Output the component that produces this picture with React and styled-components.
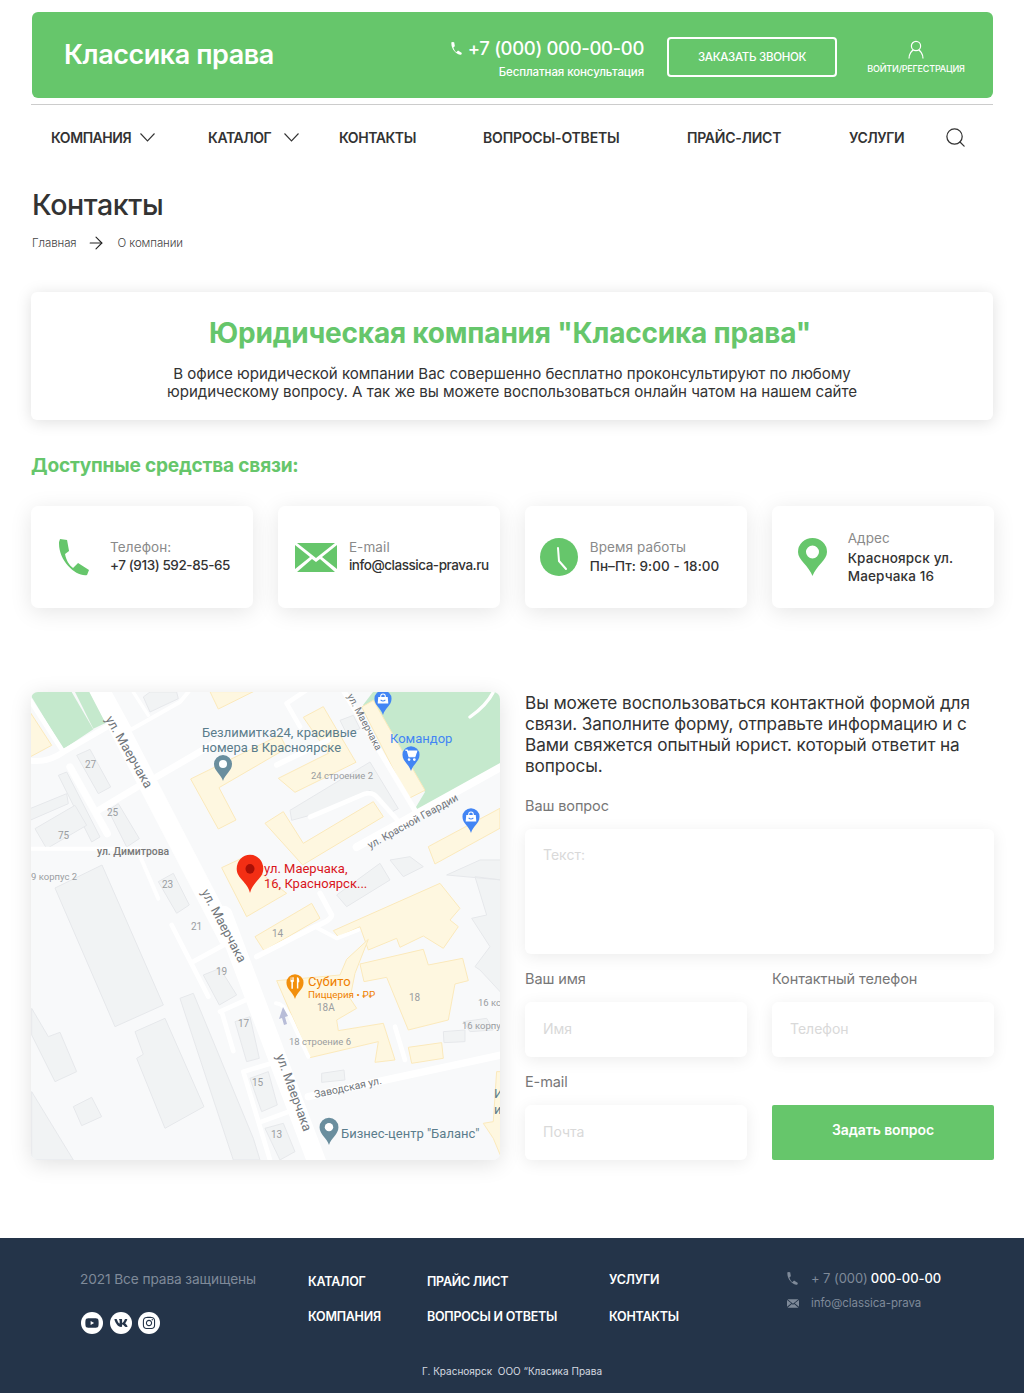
import React from "react";
import styled, { createGlobalStyle } from "styled-components";
import { Search, ArrowRight } from "lucide-react";
import { FaVk, FaYoutube, FaInstagram } from "react-icons/fa";

const GREEN = "#66c66b";
const FONT = `Inter, "Noto Sans", sans-serif`;

const Global = createGlobalStyle`
  * { box-sizing: border-box; }
  html, body { margin: 0; padding: 0; background: #fff; }
  body { font-family: ${FONT}; color: #333; }
`;

const Page = styled.div`width: 1024px; height: 1393px; display: flex; flex-direction: column;`;
const Main = styled.div`padding: 12px 31px 0 31px; flex: 1;`;

const TopBar = styled.header`
  height: 86px; margin-left: 1px; background: ${GREEN}; border-radius: 6px; color: #fff;
  display: flex; align-items: center; padding: 0 27px 0 32px;
`;
const Logo = styled.div`font-size: 27px; font-weight: 600; letter-spacing: -0.45px; flex: 1; padding-bottom: 2px;`;
const PhoneBlock = styled.div`display: flex; flex-direction: column; align-items: flex-end; gap: 6px; padding-top: 6px;`;
const PhoneLine = styled.div`display: flex; align-items: center; gap: 6px; font-size: 18.5px; line-height: 22px; font-weight: 500; letter-spacing: -0.35px;`;
const PhoneHint = styled.div`font-size: 11.5px; line-height: 14px; font-weight: 500; letter-spacing: -0.1px;`;
const CallButton = styled.button`
  width: 170px; height: 40px; margin: 4px 0 0 23px; border: 2px solid #fff; border-radius: 4px; background: transparent;
  color: #fff; font: 500 11.5px ${FONT}; letter-spacing: -0.3px;
`;
const LoginBlock = styled.div`width: 100px; margin-left: 29px; display: flex; flex-direction: column; align-items: center; gap: 4px; font-size: 9px; font-weight: 500; letter-spacing: -0.2px; white-space: nowrap; padding-top: 4px;`;

const Rule = styled.div`height: 1px; background: #ccc; margin-top: 6px;`;

const Nav = styled.nav`display: flex; align-items: center; height: 65px; padding-left: 20px;`;
const NavItem = styled.div`
  width: ${(p) => p.$w}px; display: flex; align-items: center; gap: ${(p) => p.$gap || 0}px;
  font-size: 14px; font-weight: 600; color: #333; letter-spacing: ${(p) => p.$ls ?? -0.45}px; white-space: nowrap;
`;

const Title = styled.h1`margin: 17px 0 0 1px; font-size: 28.6px; line-height: 36px; font-weight: 500; color: #333; letter-spacing: -0.4px;`;
const Crumbs = styled.div`display: flex; align-items: center; height: 20px; margin: 10px 0 0 1px; font-size: 11.5px; font-weight: 300; color: #444; letter-spacing: -0.1px;`;
const CrumbArrow = styled.span`display: flex; margin: 0 12px 0 9px; color: #222;`;

const Intro = styled.section`
  margin-top: 39px; height: 128px; background: #fff; border-radius: 6px; box-shadow: 0 2px 16px rgba(0,0,0,.13);
  text-align: center; padding-top: 23px;
`;
const IntroTitle = styled.h2`margin: 0; padding-right: 4px; font-size: 28px; line-height: 36px; font-weight: 700; color: ${GREEN}; letter-spacing: -0.2px;`;
const IntroText = styled.p`margin: 14px 0 0; font-size: 15.1px; line-height: 18px; color: #333; letter-spacing: -0.05px;`;

const SectionTitle = styled.h3`margin: 32px 0 0; font-size: 19.1px; line-height: 26px; font-weight: 700; color: ${GREEN}; letter-spacing: -0.2px;`;

const Cards = styled.div`display: grid; grid-template-columns: repeat(4, 222px); column-gap: 24.9px; margin-top: 28px;`;
const Card = styled.div`
  height: 102px; background: #fff; border-radius: 7px; box-shadow: 0 4px 22px rgba(0,0,0,.1);
  display: flex; align-items: center; gap: ${(p) => p.$gap}px; padding-left: ${(p) => p.$pad}px;
`;
const CardText = styled.div`margin-top: ${(p) => p.$top || 0}px;`;
const CardLabel = styled.div`font-size: 13.5px; line-height: 18px; color: #8a8a8a; letter-spacing: 0.1px;`;
const CardValue = styled.div`font-size: 13.5px; line-height: 18px; font-weight: 500; color: #333; letter-spacing: ${(p) => p.$ls}px; margin-top: ${(p) => p.$top || 0}px; white-space: nowrap;`;

const Columns = styled.div`display: grid; grid-template-columns: 469px 469px; column-gap: 25px; margin-top: 84px;`;
const MapBox = styled.div`height: 468px; border-radius: 7px; overflow: hidden; box-shadow: 0 4px 22px rgba(0,0,0,.12); background: #f8f9fa;`;
const MapSvg = styled.svg`display: block; width: 469px; height: 468px;`;

const FormCol = styled.div`display: flex; flex-direction: column;`;
const Lead = styled.p`margin: 0; font-size: 17.2px; line-height: 21px; color: #333; letter-spacing: -0.1px;`;
const FieldLabel = styled.label`display: block; font-size: 14.5px; line-height: 18px; color: #777; letter-spacing: -0.1px; margin-top: ${(p) => p.$top || 0}px;`;
const baseField = `
  width: 100%; display: block; border: 0; outline: 0; border-radius: 6px; background: #fff;
  box-shadow: 0 3px 16px rgba(0,0,0,.08); padding: 0 18px; font: 14px ${FONT}; color: #333;
  &::placeholder { color: #d9d9d9; opacity: 1; }
`;
const TextBox = styled.textarea`${baseField} height: 125px; margin-top: 14px; padding-top: 17px; resize: none;`;
const TextInput = styled.input`${baseField} height: 55px; margin-top: 14px; padding-bottom: 2px;`;
const FormRow = styled.div`display: grid; grid-template-columns: 222px 222px; column-gap: 25px; margin-top: ${(p) => p.$top}px; align-items: end;`;
const Submit = styled.button`height: 55px; padding: 0 0 6px; border: 0; border-radius: 2px; background: ${GREEN}; color: #fff; font: 600 14px ${FONT}; letter-spacing: -0.1px;`;

const Footer = styled.footer`height: 155px; background: #243449; color: #fff; padding: 33px 0 0 80px;`;
const FooterGrid = styled.div`display: grid; grid-template-columns: 228px 119px 182px 178px 1fr; height: 93px;`;
const Copy = styled.div`margin-top: -1px; font-size: 13.7px; line-height: 18px; color: #7f8a99; letter-spacing: -0.1px;`;
const Socials = styled.div`display: flex; gap: 6.5px; margin-top: 24px; padding-left: 1px;`;
const Social = styled.span`width: 22px; height: 22px; border-radius: 50%; background: #fff; color: #243449; display: flex; align-items: center; justify-content: center; font-size: 14px;`;
const FootCol = styled.div`display: flex; flex-direction: column; gap: ${(p) => p.$gap}px; padding-top: ${(p) => p.$top}px;`;
const FootLink = styled.div`font-size: 12.5px; line-height: 18px; font-weight: 600; letter-spacing: -0.25px; white-space: nowrap;`;
const FootContacts = styled.div`margin-top: -2px;`;
const ContactLine = styled.div`display: flex; align-items: center; gap: ${(p) => p.$gap}px; height: 18px; margin-bottom: 7px; font-size: 13px; color: #7f8a99; letter-spacing: -0.05px;`;
const Strong = styled.span`color: #fff; font-weight: 500; margin-left: 3px;`;
const Small = styled.span`font-size: 11.5px;`;
const Legal = styled.div`font-size: 10px; line-height: 14px; text-align: center; margin-left: -80px; color: #d5dae0; white-space: pre;`;

const Bld = styled.polygon`fill: ${(p) => (p.$y ? "#fef7e0" : "#f1f3f4")}; stroke: ${(p) => (p.$y ? "#fbe9bb" : "#e6e8eb")}; stroke-width: 3;`;
const Road = styled.path`fill: none; stroke: #fff; stroke-width: ${(p) => p.$w || 20}; stroke-linecap: round; stroke-linejoin: round;`;
const MapText = styled.text`font-family: Roboto, sans-serif; font-size: ${(p) => p.$s || 12}px; fill: ${(p) => p.$c || "#7d8084"}; font-weight: ${(p) => p.$b || 400};`;

const Phone = ({ s = 12, c = "#fff" }) => (
  <svg width={s * 0.84} height={s} viewBox="0 0 31 37"><path fill={c} d="M2 0L9 1l2 11-4 3c1 6 4 11 8 14l5-5 11 7-2 5C18 38 0 22 1 3z" /></svg>
);
const Chevron = () => (
  <svg width="15" height="9" viewBox="0 0 15 9" fill="none" stroke="#333" strokeWidth="1.1"><path d="M.5.5l7 7.500 7-7.500" /></svg>
);
const Mail = ({ w, h, c }) => (
  <svg width={w} height={h} viewBox="0 0 42 29"><path fill={c} d="M2 0h38L21 15zM0 2l15 12L0 26zM42 2v24L27 14zM2 29l15-13 4 3 4-3 15 13z" /></svg>
);
const Pin = ({ x, y, c, s = 1, children }) => (
  <g transform={`translate(${x} ${y}) scale(${s})`}>
    <path fill={c} d="M0 0C-2-7-9-10-9-17a9 9 0 1 1 18 0C9-10 2-7 0 0z" />
    {children}
  </g>
);
const Dot = () => <circle cx="0" cy="-17" r="4" fill="#fff" />;
const Bag = () => (
  <g fill="#fff">
    <path d="M-5-19h10l.6 7h-11.200z" />
    <path d="M-2.500-19c0-4 5-4 5 0" fill="none" stroke="#fff" strokeWidth="1.100" />
    <path d="M-2.500-16q2.500 2.500 5 0" fill="none" stroke="#4285f4" strokeWidth="1.100" />
  </g>
);
const Cart = () => (
  <g fill="none" stroke="#fff" strokeWidth="1.300">
    <path d="M-6-22h2l2 7h6l2-6h-9" fill="#fff" />
    <circle cx="-2" cy="-12" r=".8" /><circle cx="3.500" cy="-12" r=".8" />
  </g>
);
const Fork = () => (
  <g fill="#fff">
    <path d="M-4.500-23h.7v3h.6v-3h.7v3h.6v-3h.7v4.500l-1 .8v7h-1.600v-7l-1-.8z" />
    <path d="M2-23c2 0 2.500 2 2.500 5l-1 .5v6.500H2z" />
  </g>
);

const FrameA = ({ children }) => <g transform="translate(240 860) scale(.3333)">{children}</g>;
const FrameB = ({ children }) => <g transform="translate(290 692) scale(.3333)">{children}</g>;
const FrameC = ({ children }) => <g transform="translate(30 692) scale(.3333)">{children}</g>;
const Frame3 = ({ children }) => <g transform="translate(20 685) scale(.3333)">{children}</g>;
const Frame4 = ({ children }) => <g transform="translate(20 925) scale(.3333)">{children}</g>;

const MapArt = () => (
  <MapSvg viewBox="31 692 469 468">
    <rect x="31" y="692" width="469" height="468" fill="#f8f9fa" />
    <FrameC>
      <polygon fill="#c5e9cd" points="5,0 125,0 190,112 100,172 5,15" />
      <polygon fill="#c5e9cd" points="135,0 180,0 228,92 190,110" />
      <Bld $y points="0,60 65,160 0,195" />
      <Bld points="140,190 180,172 242,285 205,305" />
      <Bld points="85,250 110,240 210,435 185,450" />
      <Bld points="0,350 110,305 115,335 0,385" />
      <Bld points="15,410 135,340 170,400 50,470" />
      <Bld points="235,355 265,335 328,440 290,465" />
      <Bld points="340,15 360,0 440,0 445,20 360,60" />
      <Road $w={18} d="M-5 205Q50 215 100 180L230 105" />
      <Road $w={14} d="M0 25L100 180" />
      <Road $w={12} d="M300 115L450 30L475 0" />
      <Road $w={10} d="M240 0L300 110M310 0L355 70" />
      <Road $w={20} d="M205 355L330 280" />
      <Road $w={20} d="M380 255L560 150" />
      <Road $w={22} d="M120 225L232 425" />
      <Road $w={12} d="M-5 470H330" />
      <Road $w={12} d="M325 480L385 620" />
    </FrameC>
    <polygon fill="#c5e9cd" points="363,705 373,692 500,692 500,768 413,812 425,792" />
    <Frame3>
      <Bld $y points="570,20 700,20 595,72" />
      <Bld $y points="512,282 780,150 800,190 597,308 648,405 595,432" />
      <Bld $y points="775,280 925,205 850,97 910,65 1008,232 825,322" />
      <Bld $y points="735,415 790,380 850,475 1060,350 1090,395 848,540" />
      <Bld $y points="605,548 665,520 800,625 680,695" />
      <Bld $y points="1225,485 1440,370 1440,430 1245,537" />
      <Bld points="415,590 460,565 508,660 470,685" />
      <Road $w={16} d="M770 240L925 165" />
      <Road $w={14} d="M800 55L860 15M800 55L840 125" />
    </Frame3>
    <FrameB>
      <Bld $y points="215,45 250,25 405,295 355,320" />
      <Bld points="150,85 190,70 210,110 170,125" />
      <Bld points="0,355 240,210 325,350 305,360 240,295 60,370 5,385" />
      <Road $w={14} d="M60 375L225 305Q250 298 265 320L345 410" />
      <Road $w={16} d="M160 -5L375 355" />
      <Road $w={10} d="M540 75Q590 40 610 0" />
      <Road $w={24} d="M660 210L200 465" />
    </FrameB>
    <FrameA>
      <Bld points="290,105 420,10 450,60 320,140" />
      <Bld points="450,0 510,-10 550,20 490,50" />
      <Bld points="620,45 720,0 785,0 785,60 705,50 740,165 695,175 750,260 705,320 720,330 785,400 785,60" />
      <Bld points="670,485 740,475 760,510 690,515" />
      <Bld points="610,515 675,510 675,545 612,548" />
      <Bld $y points="45,230 215,130 240,175 72,272" />
      <Bld $y points="280,212 600,70 660,145 630,180 655,200 610,265 550,228 480,262 470,235 385,270 360,200 295,230" />
      <Bld $y points="385,238 320,298 300,345 110,362 210,593 415,545 405,607 465,600 430,490 295,512 290,480 350,445 330,415 345,340" />
      <Bld $y points="360,312 550,268 565,315 668,295 685,362 645,372 625,480 505,510 440,352 372,365" />
      <Bld $y points="505,562 605,548 610,595 515,610" />
      <Road $w={16} d="M240 100L275 165Q275 180 225 200L50 290" />
      <Road $w={12} d="M225 200L290 235L355 210" />
      <Road $w={14} d="M465 500L495 600" />
      <Road $w={12} d="M108 430Q130 430 150 470L205 590" />
    </FrameA>
    <Frame4>
      <Bld points="105,-111 246,-180 430,240 285,305" />
      <Bld points="345,320 435,280 552,545 435,610 350,400 370,388" />
      <Bld points="480,220 520,205 700,640 720,705 640,705" />
      <Bld points="160,545 215,517 245,575 185,602" />
      <Bld points="35,250 85,335 120,322 170,440 105,470 35,330" />
      <Bld points="35,500 160,705 35,705" />
      <Bld points="550,150 600,130 650,210 598,240" />
      <Bld points="645,290 690,275 718,400 680,410" />
      <Bld points="690,460 745,440 772,540 725,560" />
      <Bld points="735,610 790,595 825,680 780,705" />
      <Bld points="905,445 972,435 975,465 905,472" />
      <Bld $y points="1430,440 1445,440 1445,700 1420,640 1390,595 1420,590" />
      <Road $w={14} d="M455 0L565 215M520 110L620 55M600 260L700 215M605 260L640 378" />
      <Road $w={14} d="M670 440L770 410M670 440L750 705M725 590L820 555" />
      <Road $w={22} d="M865 515L1445 390" />
    </Frame4>
    <Frame3><Road $w={58} d="M235 10L625 760" /></Frame3>
    <Frame4><Road $w={56} d="M610 -30L890 710" /></Frame4>
    <polygon fill="#b8bdd8" points="283,1007 288,1016 285,1017 287,1024 284,1025 282,1018 279,1019" />

    <MapText transform="rotate(60 105 719)" x="105" y="719" $s={13} $c="#70757a">ул. Маерчака</MapText>
    <MapText transform="rotate(62 201 892)" x="201" y="892" $s={13} $c="#70757a">ул. Маерчака</MapText>
    <MapText transform="rotate(70 276 1056)" x="276" y="1056" $s={13} $c="#70757a">ул. Маерчака</MapText>
    <MapText transform="rotate(62 347 696)" x="347" y="696" $s={10} $c="#70757a">ул. Маерчака</MapText>
    <MapText transform="rotate(-29 370 849)" x="370" y="849" $s={10.5} $c="#70757a">ул. Красной Гвардии</MapText>
    <MapText transform="rotate(-12 315 1098)" x="315" y="1098" $s={10.5} $c="#70757a">Заводская ул.</MapText>
    <MapText x="97" y="855" $s={10.4} $c="#777" $b={500}>ул. Димитрова</MapText>

    <MapText x="202" y="737" $s={13} $c="#5b7d8c">Безлимитка24, красивые</MapText>
    <MapText x="202" y="752" $s={13} $c="#5b7d8c">номера в Красноярске</MapText>
    <MapText x="390" y="743" $s={13} $c="#4285f4">Командор</MapText>
    <MapText x="264" y="873" $s={13} $c="#d9161c">ул. Маерчака,</MapText>
    <MapText x="264" y="888" $s={13} $c="#d9161c">16, Красноярск...</MapText>
    <MapText x="308" y="986" $s={13} $c="#ef7f00">Субито</MapText>
    <MapText x="308" y="998" $s={9.8} $c="#ef7f00">Пиццерия • ₽₽</MapText>
    <MapText x="341" y="1138" $s={13} $c="#5b7d8c">Бизнес-центр "Баланс"</MapText>
    <MapText x="494" y="1098" $s={13} $c="#5b7d8c">И</MapText>
    <MapText x="494" y="1114" $s={13} $c="#5b7d8c">и</MapText>

    {[["85", "768", "27"], ["107", "816", "25"], ["58", "839", "75"], ["162", "888", "23"], ["191", "930", "21"], ["272", "937", "14"], ["216", "975", "19"], ["238", "1027", "17"], ["317", "1011", "18А"], ["409", "1001", "18"], ["252", "1086", "15"], ["271", "1138", "13"]].map(([x, y, t]) => (
      <MapText key={t} x={x} y={y} $s={10} $c="#9a9da1">{t}</MapText>
    ))}
    <MapText x="311" y="779" $s={9.5} $c="#9a9da1">24 строение 2</MapText>
    <MapText x="289" y="1045" $s={9.5} $c="#9a9da1">18 строение 6</MapText>
    <MapText x="31" y="880" $s={9.5} $c="#9a9da1">9 корпус 2</MapText>
    <MapText x="478" y="1006" $s={9.5} $c="#9a9da1">16 кс</MapText>
    <MapText x="462" y="1029" $s={9.5} $c="#9a9da1">16 корпу</MapText>

    <Pin x={223} y={781} c="#6a8e9e"><Dot /></Pin>
    <Pin x={383} y={715} c="#4285f4" s={.95}><Bag /></Pin>
    <Pin x={411} y={771} c="#4285f4" s={.95}><Cart /></Pin>
    <Pin x={471} y={833} c="#4285f4" s={.95}><Bag /></Pin>
    <Pin x={295} y={999} c="#f28f0c" s={.95}><Fork /></Pin>
    <Pin x={329} y={1145} c="#6a8e9e" s={1.05}><Dot /></Pin>
    <g transform="translate(250 893) scale(1.33 1.42)">
      <path fill="#f32e14" d="M0 0C-2-8-10-10-10-17a10 10 0 1 1 20 0C10-10 2-8 0 0z" />
      <circle cx="0" cy="-17" r="3.4" fill="#a80f06" />
    </g>
  </MapSvg>
);

export default function App() {
  return (
    <Page>
      <Global />
      <Main>
        <TopBar>
          <Logo>Классика права</Logo>
          <PhoneBlock>
            <PhoneLine><Phone s={13} />+7 (000) 000-00-00</PhoneLine>
            <PhoneHint>Бесплатная консультация</PhoneHint>
          </PhoneBlock>
          <CallButton>ЗАКАЗАТЬ ЗВОНОК</CallButton>
          <LoginBlock>
            <svg width="18" height="19" viewBox="0 0 18 19" fill="none" stroke="#fff" strokeWidth="1.2">
              <circle cx="9" cy="6" r="4.6" /><path d="M2 18.500c0-5 3-8 4.500-8.300M16 18.500c0-5-3-8-4.500-8.300" />
            </svg>
            ВОЙТИ/РЕГЕСТРАЦИЯ
          </LoginBlock>
        </TopBar>
        <Rule />
        <Nav>
          <NavItem $w={157} $gap={9}>КОМПАНИЯ <Chevron /></NavItem>
          <NavItem $w={131} $gap={13}>КАТАЛОГ <Chevron /></NavItem>
          <NavItem $w={144}>КОНТАКТЫ</NavItem>
          <NavItem $w={204} $ls={-0.17}>ВОПРОСЫ-ОТВЕТЫ</NavItem>
          <NavItem $w={162} $ls={-0.25}>ПРАЙС-ЛИСТ</NavItem>
          <NavItem $w={95}>УСЛУГИ</NavItem>
          <Search size={23} strokeWidth={1.3} color="#333" />
        </Nav>
        <Title>Контакты</Title>
        <Crumbs>Главная<CrumbArrow><ArrowRight size={20} strokeWidth={1.3} /></CrumbArrow>О компании</Crumbs>
        <Intro>
          <IntroTitle>Юридическая компания "Классика права"</IntroTitle>
          <IntroText>В офисе юридической компании Вас совершенно бесплатно проконсультируют по любому<br />юридическому вопросу. А так же вы можете воспользоваться онлайн чатом на нашем сайте</IntroText>
        </Intro>
        <SectionTitle>Доступные средства связи:</SectionTitle>
        <Cards>
          <Card $pad={27} $gap={21}>
            <Phone s={37} c={GREEN} />
            <CardText $top={-2}><CardLabel>Телефон:</CardLabel><CardValue $ls={-0.42}>+7 (913) 592-85-65</CardValue></CardText>
          </Card>
          <Card $pad={17} $gap={12}>
            <Mail w={42} h={29} c={GREEN} />
            <CardText $top={-2}><CardLabel>E-mail</CardLabel><CardValue $ls={-0.47}>info@classica-prava.ru</CardValue></CardText>
          </Card>
          <Card $pad={15} $gap={12}>
            <svg width="38" height="38" viewBox="0 0 38 38">
              <circle cx="19" cy="19" r="19" fill={GREEN} />
              <path d="M18 10l1 13 7 8" fill="none" stroke="#fff" strokeWidth="2" strokeLinecap="round" />
            </svg>
            <CardText $top={-2}><CardLabel>Время работы</CardLabel><CardValue $ls={0.06} $top={1}>Пн–Пт: 9:00 - 18:00</CardValue></CardText>
          </Card>
          <Card $pad={26} $gap={21}>
            <svg width="29" height="38" viewBox="0 0 29 38">
              <path fill={GREEN} fillRule="evenodd" d="M14.500 38C11 28 0 22 0 14a14.500 14 0 0 1 29 0c0 8-11 14-14.500 24zM14.500 7.500a6.500 6.500 0 1 0 0 13 6.500 6.500 0 0 0 0-13z" />
            </svg>
            <CardText>
              <CardLabel>Адрес</CardLabel>
              <CardValue $ls={0.15} $top={2}>Красноярск ул.</CardValue>
              <CardValue $ls={0.15}>Маерчака 16</CardValue>
            </CardText>
          </Card>
        </Cards>
        <Columns>
          <MapBox><MapArt /></MapBox>
          <FormCol>
            <Lead>Вы можете воспользоваться контактной формой для связи. Заполните форму, отправьте информацию и с Вами свяжется опытный юрист. который ответит на вопросы.</Lead>
            <FieldLabel $top={21}>Ваш вопрос</FieldLabel>
            <TextBox placeholder="Текст:" />
            <FormRow $top={16}>
              <div><FieldLabel>Ваш имя</FieldLabel><TextInput placeholder="Имя" /></div>
              <div><FieldLabel>Контактный телефон</FieldLabel><TextInput placeholder="Телефон" /></div>
            </FormRow>
            <FormRow $top={16}>
              <div><FieldLabel>E-mail</FieldLabel><TextInput placeholder="Почта" /></div>
              <Submit>Задать вопрос</Submit>
            </FormRow>
          </FormCol>
        </Columns>
      </Main>
      <Footer>
        <FooterGrid>
          <div>
            <Copy>2021 Все права защищены</Copy>
            <Socials>
              <Social><FaYoutube /></Social>
              <Social><FaVk /></Social>
              <Social><FaInstagram /></Social>
            </Socials>
          </div>
          <FootCol $gap={17} $top={2}><FootLink>КАТАЛОГ</FootLink><FootLink>КОМПАНИЯ</FootLink></FootCol>
          <FootCol $gap={17} $top={2}><FootLink>ПРАЙС ЛИСТ</FootLink><FootLink>ВОПРОСЫ И ОТВЕТЫ</FootLink></FootCol>
          <FootCol $gap={19} $top={0}><FootLink>УСЛУГИ</FootLink><FootLink>КОНТАКТЫ</FootLink></FootCol>
          <FootContacts>
            <ContactLine $gap={13}><Phone s={13} c="#7f8a99" /><span>+ 7 (000)<Strong>000-00-00</Strong></span></ContactLine>
            <ContactLine $gap={12}>
              <Mail w={12} h={9} c="#7f8a99" />
              <Small>info@classica-prava</Small>
            </ContactLine>
          </FootContacts>
        </FooterGrid>
        <Legal>Г. Красноярск  ООО “Класика Права</Legal>
      </Footer>
    </Page>
  );
}
